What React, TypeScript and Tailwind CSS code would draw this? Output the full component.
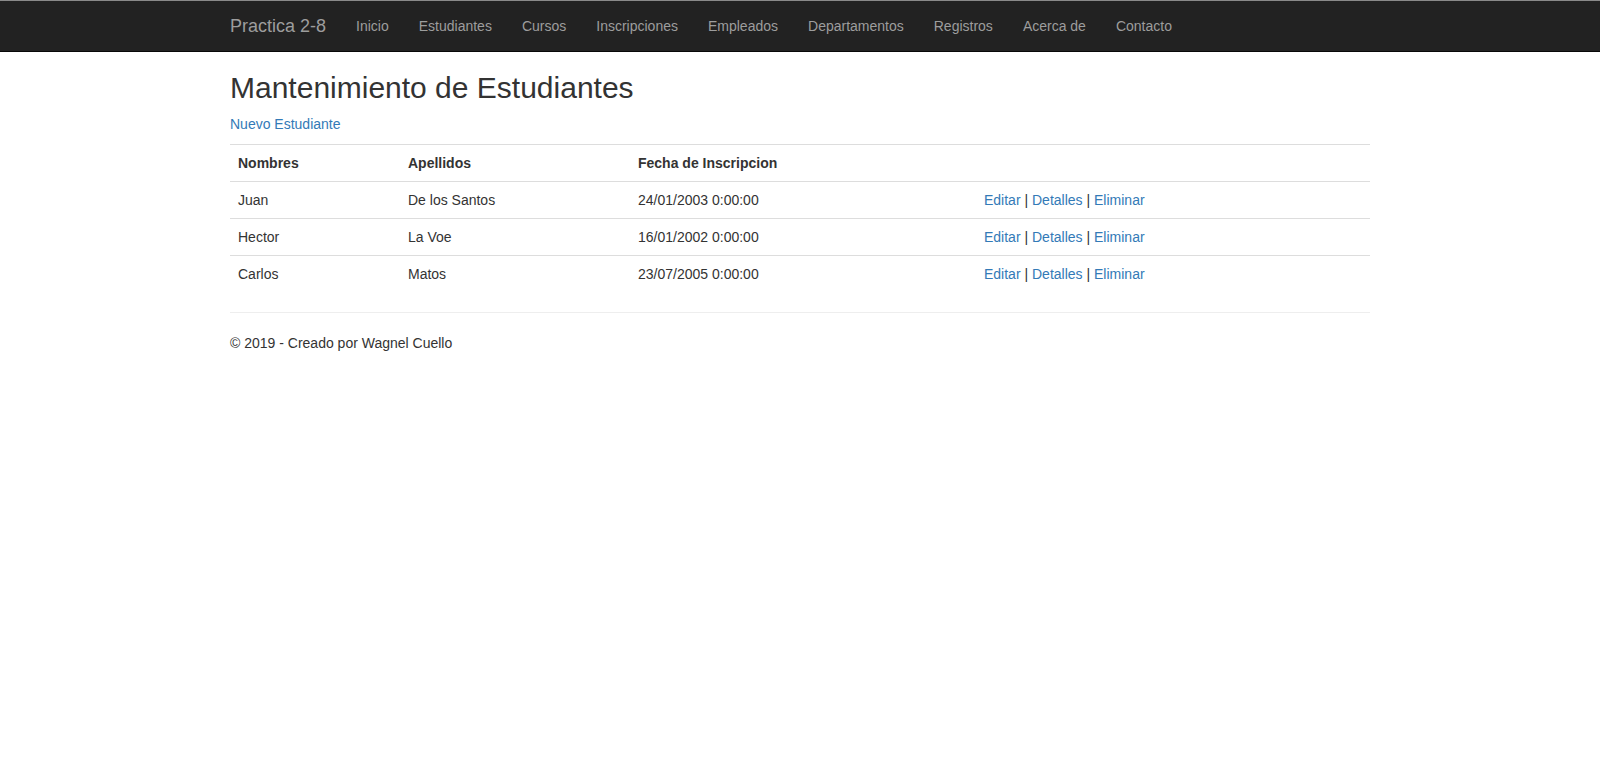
import React from "react";

const navItems = [
  "Inicio",
  "Estudiantes",
  "Cursos",
  "Inscripciones",
  "Empleados",
  "Departamentos",
  "Registros",
  "Acerca de",
  "Contacto",
];

const rows = [
  { n: "Juan", a: "De los Santos", f: "24/01/2003 0:00:00" },
  { n: "Hector", a: "La Voe", f: "16/01/2002 0:00:00" },
  { n: "Carlos", a: "Matos", f: "23/07/2005 0:00:00" },
];

export default function App() {
  return (
    <div
      className="min-h-[759px] bg-white text-[14px] leading-[20px] text-[#333]"
      style={{ fontFamily: '"Liberation Sans", Arial, Helvetica, sans-serif' }}
    >
      <div className="border-t border-t-[#8a8a8a] border-b border-b-[#080808] bg-[#222]">
        <div className="mx-auto flex h-[50px] w-[1170px] items-start px-[15px]">
          <a className="h-[50px] pr-[15px] pt-[15px] text-[18px] leading-[20px] text-[#9d9d9d]">
            Practica 2-8
          </a>
          <ul className="flex">
            {navItems.map((t) => (
              <li key={t}>
                <a className="block px-[15px] pt-[15px] pb-[15px] text-[14px] leading-[20px] text-[#9d9d9d]">
                  {t}
                </a>
              </li>
            ))}
          </ul>
        </div>
      </div>

      <div className="mx-auto w-[1170px] px-[15px] pt-[19px]">
        <h2 className="mb-[10px] text-[30px] font-normal leading-[33px] text-[#333]">
          Mantenimiento de Estudiantes
        </h2>
        <p className="mb-[10px]">
          <a className="text-[#337ab7]">Nuevo Estudiante</a>
        </p>
        <table className="mb-[20px] w-full table-fixed border-collapse">
          <colgroup>
            <col className="w-[170px]" />
            <col className="w-[230px]" />
            <col className="w-[346px]" />
            <col className="w-[394px]" />
          </colgroup>
          <tbody>
            <tr>
              <th className="border-t border-[#ddd] p-[8px] text-left font-bold">Nombres</th>
              <th className="border-t border-[#ddd] p-[8px] text-left font-bold">Apellidos</th>
              <th className="border-t border-[#ddd] p-[8px] text-left font-bold">Fecha de Inscripcion</th>
              <th className="border-t border-[#ddd] p-[8px]"></th>
            </tr>
            {rows.map((r) => (
              <tr key={r.n}>
                <td className="border-t border-[#ddd] p-[8px]">{r.n}</td>
                <td className="border-t border-[#ddd] p-[8px]">{r.a}</td>
                <td className="border-t border-[#ddd] p-[8px]">{r.f}</td>
                <td className="border-t border-[#ddd] p-[8px]">
                  <a className="text-[#337ab7]">Editar</a> |{" "}
                  <a className="text-[#337ab7]">Detalles</a> |{" "}
                  <a className="text-[#337ab7]">Eliminar</a>
                </td>
              </tr>
            ))}
          </tbody>
        </table>
        <hr className="mb-[20px] border-t border-[#eee]" />
        <footer>
          <p>© 2019 - Creado por Wagnel Cuello</p>
        </footer>
      </div>
    </div>
  );
}
